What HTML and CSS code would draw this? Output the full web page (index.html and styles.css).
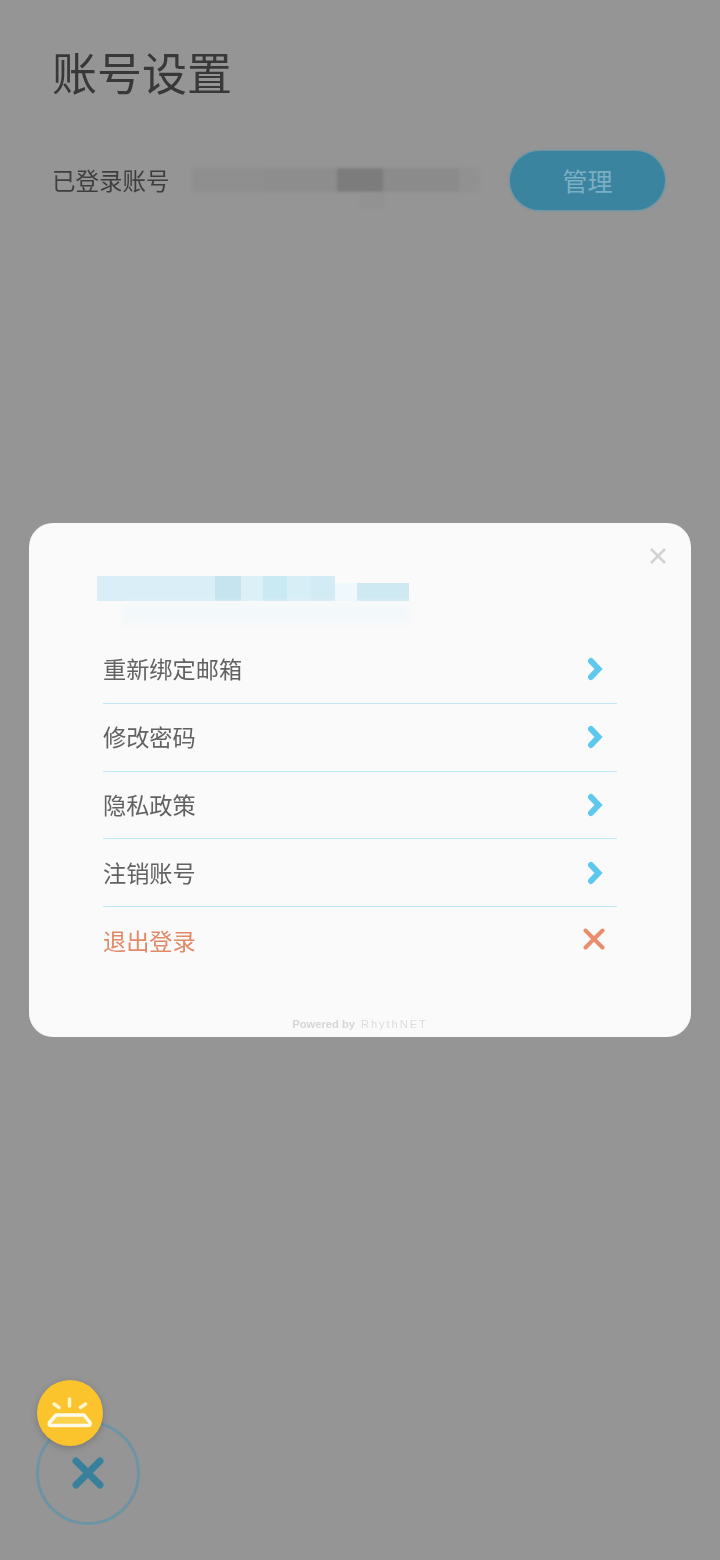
FILE: index.html
```html
<!DOCTYPE html>
<html lang="zh-CN">
<head>
<meta charset="utf-8">
<title>账号设置</title>
<link rel="stylesheet" href="styles.css">
</head>
<body>
<main class="page">
  <h1 class="title">账号设置</h1>
  <div class="account">
    <span class="account-label">已登录账号</span>
    <div class="mask mask-dark">
      <i class="s1"></i><i class="s2"></i><i class="s3"></i><i class="s4"></i><i class="s5"></i>
    </div>
    <button class="manage">管理</button>
  </div>
</main>

<section class="modal">
  <svg class="close" viewBox="0 0 18 18"><path d="M2 2 16 16M16 2 2 16"/></svg>
  <div class="email">
    <div class="mail-top">
      <i class="m1"></i><i class="m2"></i><i class="m3"></i><i class="m4"></i><i class="m5"></i><i class="m6"></i><i class="m7"></i><i class="m8"></i>
    </div>
    <div class="mail-shadow"></div>
  </div>
  <ul class="menu">
    <li class="item"><span>重新绑定邮箱</span><svg class="chev" viewBox="0 0 16 24"><path d="M4 4 11.500 12 4 20"/></svg></li>
    <li class="item"><span>修改密码</span><svg class="chev" viewBox="0 0 16 24"><path d="M4 4 11.500 12 4 20"/></svg></li>
    <li class="item"><span>隐私政策</span><svg class="chev" viewBox="0 0 16 24"><path d="M4 4 11.500 12 4 20"/></svg></li>
    <li class="item"><span>注销账号</span><svg class="chev" viewBox="0 0 16 24"><path d="M4 4 11.500 12 4 20"/></svg></li>
    <li class="item logout"><span>退出登录</span><svg class="cross" viewBox="0 0 22 22"><path d="M2.500 2.500 19.500 19.500M19.500 2.500 2.500 19.500"/></svg></li>
  </ul>
  <footer class="powered"><span class="pw">Powered by</span><span class="brand">RhythNET</span></footer>
</section>

<div class="fab-ring">
  <svg class="fab-x" viewBox="0 0 32 32"><path d="M4 4 28 28M28 4 4 28"/></svg>
</div>
<div class="lamp">
  <svg viewBox="0 0 66 66">
    <path class="lamp-rays" d="M32.500 19V26M17 24 22 27.500M48.500 24 43.500 27.500"/>
    <path class="lamp-base" d="M19 35H47L53 42.500Q54 45.500 51 45.500H14Q11.500 45.500 12.500 42.500Z"/>
  </svg>
</div>
</body>
</html>
```
FILE: styles.css
```css
* { box-sizing: border-box; }
html, body { margin: 0; padding: 0; }
body {
  width: 720px;
  height: 1560px;
  position: relative;
  overflow: hidden;
  background: #959595;
  font-family: "Noto Sans CJK SC", "Noto Sans", sans-serif;
}
.page { padding: 43px 54px 0 52px; }
.title {
  margin: 0;
  font-size: 45px;
  line-height: 58px;
  font-weight: 400;
  color: #383838;
  filter: blur(.5px);
}
.account {
  display: flex;
  align-items: center;
  margin-top: 49px;
  height: 60px;
}
.account-label {
  width: 140px;
  font-size: 23.500px;
  color: #3e3e3e;
  white-space: nowrap;
  filter: blur(.4px);
}
.mask { display: flex; }
.mask-dark {
  position: relative;
  width: 288px;
  height: 24px;
  filter: blur(1.500px);
}
.mask-dark::after {
  content: "";
  position: absolute;
  left: 168px;
  top: 26px;
  width: 24px;
  height: 14px;
  background: #929292;
}
.mask-dark i { display: block; height: 100%; }
.s1 { width: 72px; background: #8f8f8f; }
.s2 { width: 73px; background: #8d8d8d; }
.s3 { width: 46px; background: #7c7c7c; }
.s4 { width: 76px; background: #8b8b8b; }
.s5 { width: 21px; background: #919191; }
.manage {
  margin-left: 30px;
  width: 155px;
  height: 59px;
  border: 0;
  border-radius: 30px;
  background: #3b849f;
  box-shadow: 0 0 2px 1px #6496a9;
  color: #7cafc3;
  font: 400 25px "Noto Sans CJK SC", sans-serif;
  padding: 0;
}
.modal {
  position: absolute;
  left: 29px;
  top: 523px;
  width: 662px;
  height: 514px;
  border-radius: 24px;
  background: #fafafa;
  padding: 53px 74px 0 74px;
}
.close {
  position: absolute;
  right: 24px;
  top: 24px;
  width: 18px;
  height: 18px;
  fill: none;
  stroke: #d2d2d2;
  stroke-width: 2.500;
}
.email { margin-left: -6px; width: 312px; height: 60px; }
.mail-top {
  display: flex;
  align-items: flex-end;
  height: 25px;
  filter: blur(.6px);
}
.mail-top i { display: block; height: 100%; }
.m1 { width: 118px; background: #d9eef6; }
.m2 { width: 26px; background: #c5e4ef; }
.m3 { width: 22px; background: #dcf0f7; }
.m4 { width: 24px; background: #c9e9f3; }
.m5 { width: 24px; background: #d8eef6; }
.m6 { width: 24px; background: #d3ebf5; }
.m7 { width: 22px; height: 18px !important; background: #eff8fb; }
.m8 { width: 52px; height: 18px !important; background: #cfe9f3; }
.mail-shadow {
  margin: 2px 0 0 26px;
  height: 20px;
  width: 286px;
  background: #f3f8fa;
  filter: blur(3px);
}
.menu { list-style: none; margin: 0; padding: 0; }
.item {
  display: flex;
  align-items: center;
  justify-content: space-between;
  height: 67.750px;
  padding: 0 14px 0 0;
  border-bottom: 1px solid #bfe8f5;
  font-size: 23.200px;
  color: #626262;
}
.item span { white-space: nowrap; margin-top: -2px; filter: blur(.3px); }
.logout { border-bottom: 0; color: #e08a66; padding-right: 12px; }
.chev {
  width: 16px;
  height: 24px;
  fill: none;
  stroke: #5fc8ee;
  stroke-width: 6;
  stroke-linecap: round;
  stroke-linejoin: miter;
}
.cross {
  margin-top: -3px;
  width: 22px;
  height: 22px;
  fill: none;
  stroke: #ea8d6c;
  stroke-width: 4;
  stroke-linecap: round;
}
.powered {
  position: absolute;
  left: 0;
  right: 0;
  top: 494px;
  display: flex;
  justify-content: center;
  align-items: center;
  gap: 6px;
  height: 14px;
  font-family: "Liberation Sans", sans-serif;
  font-size: 11.200px;
  color: #d6d6d6;
}
.pw { font-weight: 700; filter: blur(.4px); }
.brand { font-weight: 400; letter-spacing: 1.900px; color: #dcdcdc; filter: blur(.3px); }
.fab-ring {
  position: absolute;
  left: 36px;
  top: 1421px;
  width: 104px;
  height: 104px;
  border: 3.500px solid #6d94a5;
  border-radius: 50%;
  display: flex;
  align-items: center;
  justify-content: center;
}
.fab-x {
  width: 32px;
  height: 32px;
  margin-top: -1px;
  fill: none;
  stroke: #39809d;
  stroke-width: 7;
  stroke-linecap: round;
}
.lamp {
  position: absolute;
  left: 37px;
  top: 1380px;
  width: 66px;
  height: 66px;
  border-radius: 50%;
  background: #fcc42c;
  box-shadow: 0 2px 6px rgba(70, 70, 70, .35);
}
.lamp svg { display: block; width: 66px; height: 66px; }
.lamp-rays { fill: none; stroke: #fff3cc; stroke-width: 3.500; stroke-linecap: round; }
.lamp-base { fill: #fbd24e; stroke: #fffbe9; stroke-width: 3.500; stroke-linejoin: round; }
```
